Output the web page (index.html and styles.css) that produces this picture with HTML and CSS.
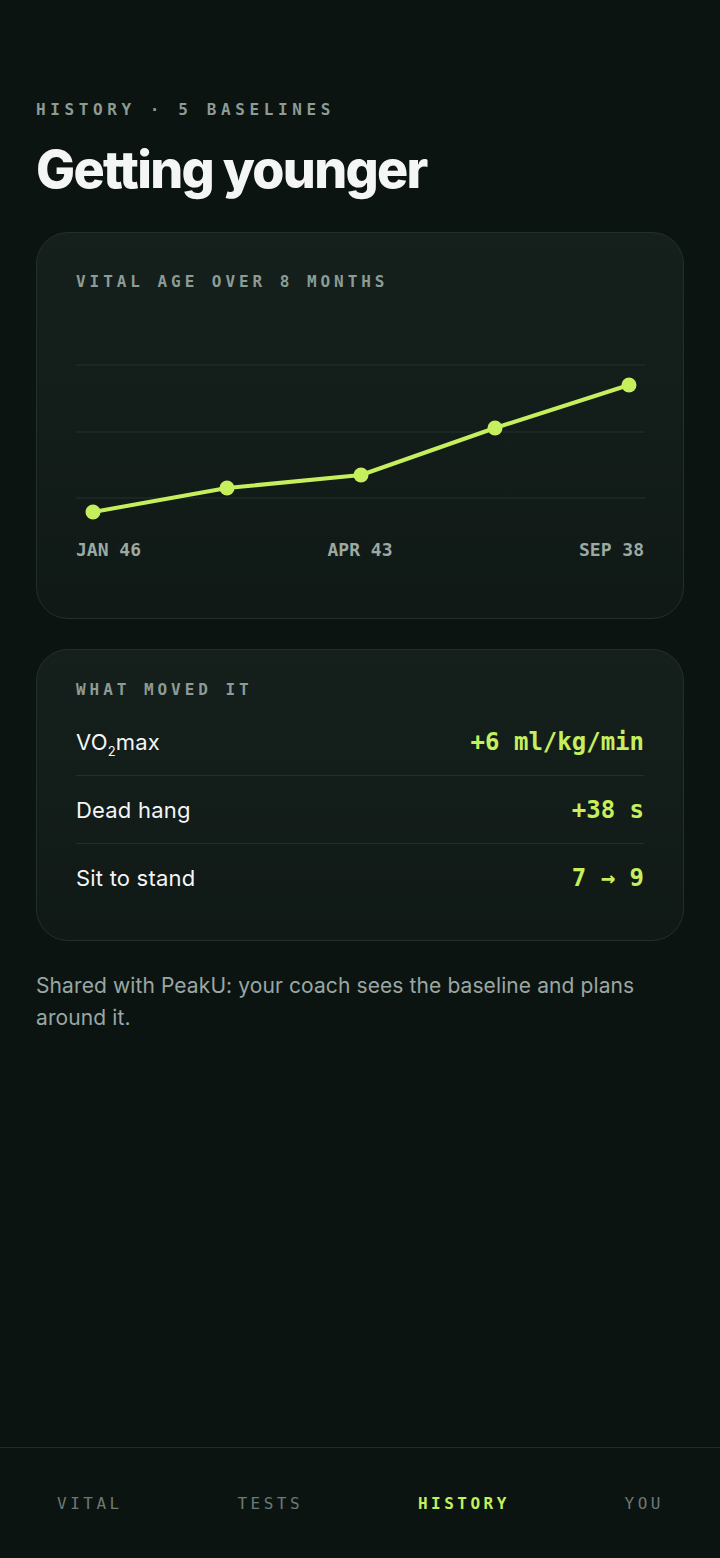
FILE: index.html
```html
<!DOCTYPE html>
<html lang="en">
<head>
<meta charset="utf-8">
<title>History</title>
<link rel="stylesheet" href="styles.css">
</head>
<body>
<main class="page">
  <p class="eyebrow">HISTORY · 5 BASELINES</p>
  <h1 class="title">Getting younger</h1>

  <section class="card chart-card">
    <h2 class="card-title">VITAL AGE OVER 8 MONTHS</h2>
    <svg class="chart" width="569" height="196" viewBox="0 0 569 196">
      <line x1="0" y1="35" x2="569" y2="35" class="grid"/>
      <line x1="0" y1="102" x2="569" y2="102" class="grid"/>
      <line x1="0" y1="168" x2="569" y2="168" class="grid"/>
      <polyline class="line" points="17,182 151,158 285,145 419,98 553,55"/>
      <circle class="dot" cx="17" cy="182" r="7.5"/>
      <circle class="dot" cx="151" cy="158" r="7.5"/>
      <circle class="dot" cx="285" cy="145" r="7.5"/>
      <circle class="dot" cx="419" cy="98" r="7.5"/>
      <circle class="dot" cx="553" cy="55" r="7.5"/>
    </svg>
    <div class="axis">
      <span>JAN 46</span>
      <span>APR 43</span>
      <span>SEP 38</span>
    </div>
  </section>

  <section class="card moved-card">
    <h2 class="card-title">WHAT MOVED IT</h2>
    <ul class="rows">
      <li class="row"><span class="label">VO<sub>2</sub>max</span><span class="value">+6 ml/kg/min</span></li>
      <li class="row"><span class="label">Dead hang</span><span class="value">+38 s</span></li>
      <li class="row"><span class="label">Sit to stand</span><span class="value">7 → 9</span></li>
    </ul>
  </section>

  <p class="note">Shared with PeakU: your coach sees the baseline and plans around it.</p>
</main>

<nav class="tabbar">
  <span class="tab">VITAL</span>
  <span class="tab">TESTS</span>
  <span class="tab active">HISTORY</span>
  <span class="tab">YOU</span>
</nav>
</body>
</html>
```

FILE: styles.css
```css
* { box-sizing: border-box; }

html, body {
  margin: 0;
  padding: 0;
  background: #0c1412;
}

body {
  min-height: 100vh;
  display: flex;
  flex-direction: column;
  font-family: Inter, "Noto Sans", sans-serif;
  color: #f2f4f3;
}

.page {
  flex: 1;
  padding: 98px 36px 0;
}

.eyebrow {
  margin: 0;
  font-family: "DejaVu Sans Mono", "Liberation Mono", monospace;
  font-weight: 700;
  font-size: 16px;
  line-height: 24px;
  letter-spacing: 4.6px;
  color: #8d9b95;
}

.title {
  margin: 18px 0 0;
  font-family: Inter, sans-serif;
  font-weight: 800;
  font-size: 52px;
  line-height: 60px;
  letter-spacing: -1.7px;
  color: #f4f6f5;
}

.card {
  border: 1px solid #222f2b;
  border-radius: 32px;
  background: linear-gradient(180deg, #15201d 0%, #101916 100%);
}

.chart-card {
  margin-top: 32px;
  padding: 39px 39px 57px;
}

.card-title {
  margin: 0;
  font-family: "DejaVu Sans Mono", "Liberation Mono", monospace;
  font-weight: 700;
  font-size: 16px;
  line-height: 20px;
  letter-spacing: 3.95px;
  color: #8d9b95;
}

.chart {
  display: block;
  margin-top: 38px;
  overflow: visible;
}

.grid {
  stroke: #1f2b28;
  stroke-width: 1.5;
}

.line {
  fill: none;
  stroke: #c6ef5e;
  stroke-width: 4;
  stroke-linejoin: round;
  stroke-linecap: round;
}

.dot {
  fill: #c6ef5e;
}

.axis {
  margin-top: 13px;
  display: flex;
  justify-content: space-between;
  font-family: "DejaVu Sans Mono", "Liberation Mono", monospace;
  font-weight: 700;
  font-size: 18px;
  line-height: 22px;
  color: #9ba9a3;
}

.moved-card {
  margin-top: 30px;
  padding: 30px 39px 29px;
}

.rows {
  list-style: none;
  margin: 8px 0 0;
  padding: 0;
}

.row {
  display: flex;
  justify-content: space-between;
  align-items: center;
  height: 68px;
  border-bottom: 1px solid #222e2b;
}

.row:last-child {
  border-bottom: none;
  height: 67px;
}

.label {
  font-size: 22px;
  line-height: 30px;
  font-weight: 400;
  letter-spacing: 0.2px;
  color: #f4f6f5;
}

.label sub {
  font-size: 13px;
  line-height: 0;
  vertical-align: -6px;
}

.value {
  font-family: "DejaVu Sans Mono", "Liberation Mono", monospace;
  font-weight: 700;
  font-size: 24px;
  line-height: 30px;
  color: #c6ef5e;
}

.note {
  margin: 29px 0 0;
  font-size: 21px;
  line-height: 32px;
  letter-spacing: 0.1px;
  color: #9aa7a2;
}

.tabbar {
  display: flex;
  justify-content: space-between;
  padding: 45px 56px 43px 57px;
  border-top: 1px solid #1f2d2a;
}

.tab {
  font-family: "DejaVu Sans Mono", "Liberation Mono", monospace;
  font-weight: 400;
  font-size: 16px;
  line-height: 22px;
  letter-spacing: 3.5px;
  color: #6c7975;
}

.tab.active {
  font-weight: 700;
  color: #c6ef5e;
}
```
